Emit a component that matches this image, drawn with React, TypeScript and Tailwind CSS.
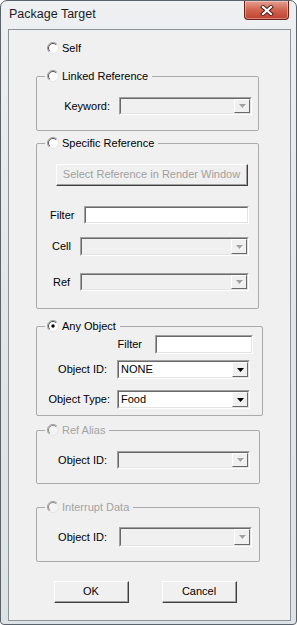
import React from "react";

function Radio({ checked = false, disabled = false }: { checked?: boolean; disabled?: boolean }) {
  return (
    <svg width="12" height="12" viewBox="0 0 12 12" className="shrink-0">
      <circle cx="6" cy="6" r="5.5" fill={disabled ? "#f4f4f4" : "#ffffff"} stroke="#e3e3e3" strokeWidth="1" />
      <path d="M2.1 9.9 A5.5 5.5 0 0 1 9.9 2.1" stroke="#a0a0a0" strokeWidth="1" fill="none" />
      <path d="M2.8 9.2 A4.5 4.5 0 0 1 9.2 2.8" stroke={disabled ? "#8a8a8a" : "#555555"} strokeWidth="1" fill="none" />
      {checked && <circle cx="6" cy="6" r="1.7" fill="#000000" />}
    </svg>
  );
}

function Arrow({ disabled }: { disabled: boolean }) {
  return (
    <svg width="7" height="4" viewBox="0 0 7 4">
      {disabled && <path d="M1 1 L8 1 L4.5 5 Z" fill="#ffffff" />}
      <path d="M0 0 L7 0 L3.5 4 Z" fill={disabled ? "#a0a0a0" : "#000000"} />
    </svg>
  );
}

function Combo({ className, text, disabled = false }: { className: string; text?: string; disabled?: boolean }) {
  return (
    <div className={`flex shrink-0 border-t border-l border-b border-r border-t-[#a0a0a0] border-l-[#a0a0a0] border-b-white border-r-white ${className}`}>
      <div
        className={`flex flex-1 items-stretch border-t border-l border-b border-r border-t-[#696969] border-l-[#696969] border-b-[#e3e3e3] border-r-[#e3e3e3] ${
          disabled ? "bg-[#f0f0f0]" : "bg-white"
        }`}
      >
        <div className="flex flex-1 items-center pl-[2px] text-black">{text}</div>
        <div className="flex w-[16px] items-center justify-center border-t border-l border-b border-r border-t-white border-l-white border-b-[#696969] border-r-[#696969] bg-[#f0f0f0]">
          <Arrow disabled={disabled} />
        </div>
      </div>
    </div>
  );
}

function TextBox({ className }: { className: string }) {
  return (
    <div className={`flex shrink-0 border-t border-l border-b border-r border-t-[#a0a0a0] border-l-[#a0a0a0] border-b-white border-r-white ${className}`}>
      <div className="flex-1 border-t border-l border-b border-r border-t-[#696969] border-l-[#696969] border-b-[#e3e3e3] border-r-[#e3e3e3] bg-white" />
    </div>
  );
}

function Button({ className, children, disabled = false }: { className: string; children: React.ReactNode; disabled?: boolean }) {
  return (
    <div className={`flex shrink-0 border-t border-l border-b border-r border-t-white border-l-white border-b-[#404040] border-r-[#404040] ${className}`}>
      <div
        className={`flex flex-1 items-center justify-center border-b border-r border-b-[#a0a0a0] border-r-[#a0a0a0] bg-[#f0f0f0] ${
          disabled ? "text-[#a0a0a0]" : "text-black"
        }`}
      >
        {children}
      </div>
    </div>
  );
}

function Group({
  title,
  checked = false,
  disabled = false,
  className,
  children,
}: {
  title: string;
  checked?: boolean;
  disabled?: boolean;
  className: string;
  children: React.ReactNode;
}) {
  return (
    <fieldset className={`ml-[27px] min-w-0 rounded-[2px] border border-[#aaaaaa] ${className}`}>
      <legend className="ml-[8px] flex h-[14px] items-center gap-[3px] px-[2px] pr-[4px] leading-[14px]">
        <Radio checked={checked} disabled={disabled} />
        <span className={disabled ? "text-[#a3a3a3]" : "text-black"}>{title}</span>
      </legend>
      {children}
    </fieldset>
  );
}

export default function App() {
  return (
    <div className="flex h-[625px] w-[297px] flex-col rounded-t-[7px] rounded-b-[4px] border border-[#5a626b] bg-gradient-to-b from-[#eef0f2] via-[#e2e6ea] to-[#dde2e6] font-['Liberation_Sans',Arial,sans-serif] text-[11px] text-black">
      {/* title bar */}
      <div className="flex h-[28px] shrink-0 items-start">
        <span className="pl-[8px] pt-[6px] text-[12.5px] leading-[15px] text-[#1c1c1c]">Package Target</span>
        <div className="ml-auto mr-[7px] flex h-[19px] w-[45px] items-center justify-center rounded-b-[4px] border border-t-0 border-[#6b2118] bg-gradient-to-b from-[#e4a093] via-[#d0634f] to-[#c2412f] shadow-[inset_0_0_0_1px_rgba(255,255,255,0.35)]">
          <svg width="14" height="11" viewBox="0 0 14 11">
            <path d="M3 2 L11 9 M11 2 L3 9" stroke="#4a1a14" strokeWidth="4" strokeLinecap="square" />
            <path d="M3 2 L11 9 M11 2 L3 9" stroke="#ffffff" strokeWidth="2.2" strokeLinecap="square" />
          </svg>
        </div>
      </div>

      {/* client area */}
      <div className="mb-[3px] ml-[7px] mr-[5px] flex flex-1 flex-col border border-[#8b939b] bg-[#f0f0f0]">
        {/* Self */}
        <div className="ml-[38px] mt-[12px] flex h-[12px] items-center gap-[3px]">
          <Radio />
          <span>Self</span>
        </div>

        {/* Linked Reference */}
        <Group title="Linked Reference" className="mt-[15px] w-[223px] pb-[15px]">
          <div className="mt-[14px] flex items-center">
            <div className="w-[82px] pr-[9px] text-right">Keyword:</div>
            <Combo className="h-[18px] w-[133px]" disabled />
          </div>
        </Group>

        {/* Specific Reference */}
        <Group title="Specific Reference" className="mt-[5px] w-[223px] pb-[17px]">
          <Button className="ml-[19px] mt-[14px] h-[22px] w-[192px]" disabled>
            Select Reference in Render Window
          </Button>
          <div className="mt-[20px] flex items-center">
            <div className="w-[47px] pl-[13px]">Filter</div>
            <TextBox className="h-[18px] w-[165px]" />
          </div>
          <div className="mt-[13px] flex items-center">
            <div className="w-[43px] pl-[15px]">Cell</div>
            <Combo className="h-[19px] w-[169px]" disabled />
          </div>
          <div className="mt-[17px] flex items-center">
            <div className="w-[43px] pl-[16px]">Ref</div>
            <Combo className="h-[18px] w-[169px]" disabled />
          </div>
        </Group>

        {/* Any Object */}
        <Group title="Any Object" checked className="mt-[10px] w-[227px] pb-[6px]">
          <div className="mt-[2px] flex items-center">
            <div className="w-[118px] pr-[13px] text-right">Filter</div>
            <TextBox className="h-[19px] w-[98px]" />
          </div>
          <div className="mt-[6px] flex items-center">
            <div className="w-[80px] pr-[10px] text-right">Object ID:</div>
            <Combo className="h-[19px] w-[133px]" text="NONE" />
          </div>
          <div className="mt-[11px] flex items-center">
            <div className="w-[80px] pr-[7px] text-right">Object Type:</div>
            <Combo className="h-[19px] w-[133px]" text="Food" />
          </div>
        </Group>

        {/* Ref Alias */}
        <Group title="Ref Alias" disabled className="mt-[7px] w-[224px] pb-[14px]">
          <div className="mt-[14px] flex items-center">
            <div className="w-[80px] pr-[10px] text-right">Object ID:</div>
            <Combo className="h-[18px] w-[133px]" disabled />
          </div>
        </Group>

        {/* Interrupt Data */}
        <Group title="Interrupt Data" disabled className="mt-[16px] w-[224px] pb-[14px]">
          <div className="mt-[13px] flex items-center">
            <div className="w-[82px] pr-[12px] text-right">Object ID:</div>
            <Combo className="h-[20px] w-[133px]" disabled />
          </div>
        </Group>

        {/* Buttons */}
        <div className="mt-[19px] flex">
          <Button className="ml-[45px] h-[22px] w-[75px]">OK</Button>
          <Button className="ml-[33px] h-[22px] w-[75px]">Cancel</Button>
        </div>
      </div>
    </div>
  );
}
